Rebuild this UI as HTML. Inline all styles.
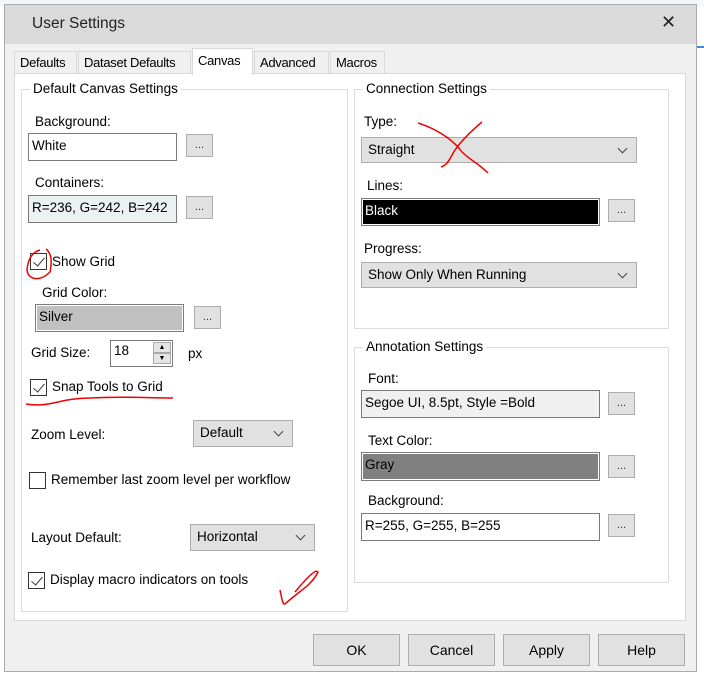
<!DOCTYPE html>
<html><head><meta charset="utf-8"><style>
*{box-sizing:border-box;margin:0;padding:0}
body{width:704px;height:681px;position:relative;background:#fff;font-family:"Liberation Sans",sans-serif;font-size:13.5px;color:#000;overflow:hidden}
.a{position:absolute}
.t{position:absolute;white-space:nowrap;line-height:16px}
.in{position:absolute;border:1px solid #7a7a7a;background:#fff;padding:3px 3px;line-height:18px;white-space:nowrap}
.eb{position:absolute;width:27px;height:23px;border:1px solid #adadad;background:#e1e1e1;text-align:center;font-size:11px;line-height:20px;color:#333}
.cb{position:absolute;border:1px solid #adadad;background:#e1e1e1;padding:0 6px;line-height:24px;white-space:nowrap}
.cb:after{content:"";position:absolute;right:10px;top:7px;width:6px;height:6px;border-right:1px solid #444;border-bottom:1px solid #444;transform:rotate(45deg)}
.chk{position:absolute;width:17px;height:17px;border:1px solid #333;background:#fff}
.chk.on:after{content:"";position:absolute;left:5px;top:1px;width:5px;height:10px;border-right:1.5px solid #333;border-bottom:1.5px solid #333;transform:rotate(40deg)}
.gb{position:absolute;border:1px solid #dcdcdc}
.gl{position:absolute;background:#fff;padding:0 3px;top:-9px;left:8px;line-height:16px;white-space:nowrap}
.tab{position:absolute;top:51px;height:23px;border:1px solid #d9d9d9;border-bottom:none;background:#f0f0f0;padding:0 5px;line-height:22px;white-space:nowrap;font-size:13px;letter-spacing:-0.3px;overflow:hidden}
.bt{position:absolute;top:634px;width:87px;height:32px;border:1px solid #adadad;background:#e1e1e1;text-align:center;line-height:30px;font-size:14px}
</style></head><body>
<div class="a" style="left:0;top:0;width:704px;height:6px;background:#f4f7fa"></div>
<div class="a" style="left:4px;top:4px;width:693px;height:668px;background:#f0f0f0;border:1px solid #aaa"></div>
<div class="a" style="left:5px;top:5px;width:691px;height:39px;background:#dadada"></div>
<div class="t" style="left:32px;top:16px;font-size:15.5px;color:#222">User Settings</div>
<div class="t" style="left:661px;top:14px;font-size:18px;color:#222">✕</div>
<div class="a" style="left:697px;top:46px;width:7px;height:2px;background:#3c8dd8"></div>

<div class="tab" style="left:14px;width:63px">Defaults</div>
<div class="tab" style="left:78px;width:113px">Dataset Defaults</div>
<div class="tab" style="left:330px;width:55px">Macros</div>
<div class="tab" style="left:254px;width:75px">Advanced</div>
<div class="a" style="left:14px;top:73px;width:672px;height:548px;background:#fff;border:1px solid #d9d9d9"></div>
<div class="tab" style="left:192px;top:48px;height:27px;width:61px;background:#fff;line-height:24px">Canvas</div>

<div class="gb" style="left:21px;top:89px;width:327px;height:523px"><div class="gl">Default Canvas Settings</div></div>
<div class="t" style="left:35px;top:114px">Background:</div>
<div class="in" style="left:28px;top:133px;width:149px;height:28px">White</div>
<div class="eb" style="left:186px;top:134px">...</div>
<div class="t" style="left:35px;top:175px">Containers:</div>
<div class="in" style="left:28px;top:195px;width:149px;height:28px;background:#ecf2f2">R=236, G=242, B=242</div>
<div class="eb" style="left:186px;top:196px">...</div>
<div class="chk on" style="left:30px;top:253px"></div>
<div class="t" style="left:52px;top:254px">Show Grid</div>
<div class="t" style="left:42px;top:285px">Grid Color:</div>
<div class="in" style="left:35px;top:304px;width:149px;height:28px;background:#c0c0c0;box-shadow:inset 0 0 0 1px #fff">Silver</div>
<div class="eb" style="left:194px;top:306px">...</div>
<div class="t" style="left:31px;top:345px">Grid Size:</div>
<div class="in" style="left:110px;top:340px;width:63px;height:27px;padding-top:1px">18</div>
<div class="a" style="left:153px;top:342px;width:18px;height:11px;background:#e5e5e5;border:1px solid #aaa;font-size:7px;text-align:center;line-height:9px">▲</div>
<div class="a" style="left:153px;top:353px;width:18px;height:11px;background:#e5e5e5;border:1px solid #aaa;font-size:7px;text-align:center;line-height:9px">▼</div>
<div class="t" style="left:188px;top:346px">px</div>
<div class="chk on" style="left:30px;top:379px"></div>
<div class="t" style="left:52px;top:379px">Snap Tools to Grid</div>
<div class="t" style="left:31px;top:427px">Zoom Level:</div>
<div class="cb" style="left:193px;top:420px;width:100px;height:27px">Default</div>
<div class="chk" style="left:29px;top:472px"></div>
<div class="t" style="left:51px;top:472px">Remember last zoom level per workflow</div>
<div class="t" style="left:31px;top:530px">Layout Default:</div>
<div class="cb" style="left:190px;top:524px;width:125px;height:27px">Horizontal</div>
<div class="chk on" style="left:28px;top:572px"></div>
<div class="t" style="left:50px;top:572px">Display macro indicators on tools</div>

<div class="gb" style="left:354px;top:89px;width:315px;height:240px"><div class="gl">Connection Settings</div></div>
<div class="t" style="left:364px;top:114px">Type:</div>
<div class="cb" style="left:361px;top:137px;width:276px;height:26px">Straight</div>
<div class="t" style="left:367px;top:178px">Lines:</div>
<div class="in" style="left:361px;top:198px;width:239px;height:28px;background:#000;color:#fff;box-shadow:inset 0 0 0 1px #fff">Black</div>
<div class="eb" style="left:608px;top:199px">...</div>
<div class="t" style="left:364px;top:241px">Progress:</div>
<div class="cb" style="left:361px;top:262px;width:276px;height:26px">Show Only When Running</div>

<div class="gb" style="left:354px;top:347px;width:315px;height:236px"><div class="gl">Annotation Settings</div></div>
<div class="t" style="left:368px;top:371px">Font:</div>
<div class="in" style="left:361px;top:390px;width:239px;height:28px;background:#f0f0f0">Segoe UI, 8.5pt, Style =Bold</div>
<div class="eb" style="left:608px;top:392px">...</div>
<div class="t" style="left:368px;top:433px">Text Color:</div>
<div class="in" style="left:361px;top:452px;width:239px;height:29px;background:#808080;box-shadow:inset 0 0 0 1px #fff">Gray</div>
<div class="eb" style="left:608px;top:455px">...</div>
<div class="t" style="left:368px;top:493px">Background:</div>
<div class="in" style="left:361px;top:513px;width:239px;height:28px">R=255, G=255, B=255</div>
<div class="eb" style="left:608px;top:514px">...</div>

<div class="bt" style="left:313px">OK</div>
<div class="bt" style="left:408px">Cancel</div>
<div class="bt" style="left:503px">Apply</div>
<div class="bt" style="left:598px">Help</div>

<svg class="a" style="left:0;top:0" width="704" height="681">
<g fill="none" stroke="#e00" stroke-width="1.5">
<path d="M418 123 C440 130 455 142 462 152 C470 160 478 163 488 173"/>
<path d="M482 122 C470 132 462 140 455 150 C450 158 448 165 441 167"/>
<path d="M40 250 C33 252 28 258 27 270 C28 280 40 282 50 272 C52 262 52 254 46 249"/>
<path d="M26 404 C50 408 60 398 90 398 C120 396 150 398 173 398"/>
<path d="M280 590 C282 600 283 605 285 604 C298 592 312 585 318 572 C316 568 305 580 295 592"/>
</g></svg>
</body></html>
